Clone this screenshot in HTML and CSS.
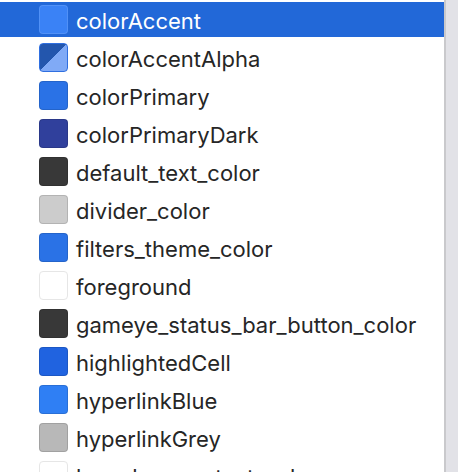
FILE: index.html
```html
<!DOCTYPE html>
<html>
<head>
<meta charset="utf-8">
<link rel="stylesheet" href="styles.css">
</head>
<body>
<div class="pane">
  <ul class="list">
    <li class="item selected"><div class="bar"><span class="sw sw-accent"></span><span class="name">colorAccent</span></div></li>
    <li class="item"><div class="bar"><span class="sw sw-alpha"></span><span class="name">colorAccentAlpha</span></div></li>
    <li class="item"><div class="bar"><span class="sw sw-primary"></span><span class="name">colorPrimary</span></div></li>
    <li class="item"><div class="bar"><span class="sw sw-primary-dark"></span><span class="name">colorPrimaryDark</span></div></li>
    <li class="item"><div class="bar"><span class="sw sw-dark"></span><span class="name">default_text_color</span></div></li>
    <li class="item"><div class="bar"><span class="sw sw-divider"></span><span class="name">divider_color</span></div></li>
    <li class="item"><div class="bar"><span class="sw sw-primary"></span><span class="name">filters_theme_color</span></div></li>
    <li class="item"><div class="bar"><span class="sw sw-white"></span><span class="name">foreground</span></div></li>
    <li class="item"><div class="bar"><span class="sw sw-dark"></span><span class="name">gameye_status_bar_button_color</span></div></li>
    <li class="item"><div class="bar"><span class="sw sw-highlight"></span><span class="name">highlightedCell</span></div></li>
    <li class="item"><div class="bar"><span class="sw sw-link"></span><span class="name">hyperlinkBlue</span></div></li>
    <li class="item"><div class="bar"><span class="sw sw-grey"></span><span class="name">hyperlinkGrey</span></div></li>
    <li class="item"><div class="bar"><span class="sw sw-white"></span><span class="name">launcher_context_color</span></div></li>
  </ul>
  <div class="side"></div>
</div>
</body>
</html>
```
FILE: styles.css
```css
html, body {
  margin: 0;
  padding: 0;
  background: #ffffff;
  overflow: hidden;
}
.pane {
  display: flex;
  width: 458px;
  height: 472px;
  overflow: hidden;
}
.list {
  list-style: none;
  margin: 0;
  padding: 0;
  width: 444px;
  flex: none;
  background: #ffffff;
}
.side {
  flex: 1;
  background: #e2e2e7;
  border-left: 2px solid #c9c9cc;
}
.item {
  height: 38px;
  display: flex;
  flex-direction: column;
}
.bar {
  margin-top: 2px;
  height: 35px;
  display: flex;
  align-items: center;
  padding-left: 39px;
  gap: 8px;
  font-family: "Inter", "Liberation Sans", sans-serif;
  font-size: 22px;
  color: #262626;
}
.name {
  padding-top: 2px;
}
.selected .bar {
  background: #2268d8;
  color: #ffffff;
}
.sw {
  width: 29px;
  height: 29px;
  box-sizing: border-box;
  border-radius: 4px;
  border: 1px solid rgba(0, 0, 0, 0.12);
  flex: none;
}
.sw-accent { background: #3a82f6; border-color: rgba(255,255,255,0.12); }
.sw-alpha { background: linear-gradient(to bottom right, #2356ad 0%, #2356ad 50%, #80aaf6 50%, #80aaf6 100%); border-color: #2f6fe0; }
.sw-primary { background: #2a72e6; }
.sw-primary-dark { background: #30409c; }
.sw-dark { background: #383838; }
.sw-divider { background: #cccccc; }
.sw-white { background: #ffffff; border-color: #e6e6e6; }
.sw-highlight { background: #2063e0; }
.sw-link { background: #2f7ff4; }
.sw-grey { background: #b8b8b8; }
```
